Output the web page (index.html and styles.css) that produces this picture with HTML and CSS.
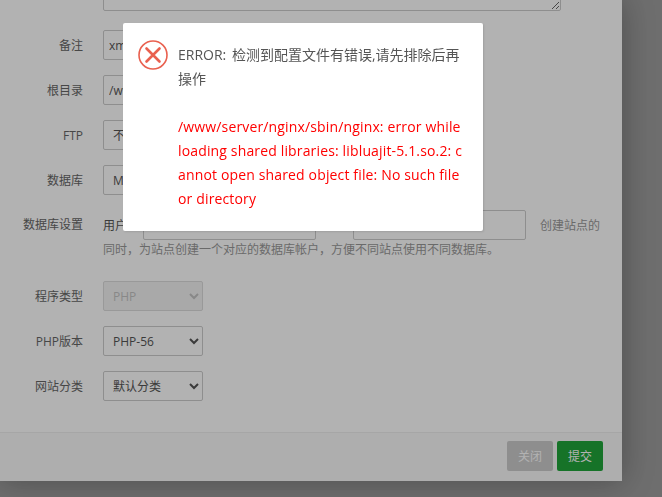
FILE: index.html
```html
<!DOCTYPE html>
<html lang="zh-CN">
<head>
    <meta charset="UTF-8">
    <meta name="viewport" content="width=device-width, initial-scale=1.0">
    <title>添加站点</title>
    <link rel="stylesheet" href="styles.css">
</head>
<body>
    <div class="panel">
        <form class="site-form">
            <div class="top-row">
                <textarea class="field-area"></textarea>
            </div>
            <div class="form-row">
                <label class="row-label">备注</label>
                <input class="field-input" type="text" value="xmr.example.com">
            </div>
            <div class="form-row">
                <label class="row-label">根目录</label>
                <input class="field-input" type="text" value="/www/wwwroot/xmr.example.com">
            </div>
            <div class="form-row">
                <label class="row-label">FTP</label>
                <select class="field-select wide"><option>不创建</option></select>
            </div>
            <div class="form-row">
                <label class="row-label">数据库</label>
                <select class="field-select wide"><option>MySQL</option></select>
            </div>
            <div class="form-row db-row">
                <label class="row-label">数据库设置</label>
                <div class="db-fields">
                    <div class="db-line">
                        <span class="db-name">用户名</span>
                        <input class="field-input db-input" type="text">
                        <span class="db-pass">密码</span>
                        <input class="field-input db-input" type="text">
                        <span class="db-hint">创建站点的</span>
                    </div>
                    <p class="hint-line">同时，为站点创建一个对应的数据库帐户，方便不同站点使用不同数据库。</p>
                </div>
            </div>
            <div class="form-row">
                <label class="row-label">程序类型</label>
                <select class="field-select" disabled><option>PHP</option></select>
            </div>
            <div class="form-row">
                <label class="row-label">PHP版本</label>
                <select class="field-select"><option>PHP-56</option></select>
            </div>
            <div class="form-row">
                <label class="row-label">网站分类</label>
                <select class="field-select"><option>默认分类</option></select>
            </div>
        </form>
        <div class="panel-footer">
            <button class="btn btn-close" type="button">关闭</button>
            <button class="btn btn-submit" type="button">提交</button>
        </div>
    </div>

    <div class="shade"></div>

    <!-- error dialog -->
    <div class="dialog">
        <svg class="dialog-icon" width="30" height="30" viewBox="0 0 30 30">
            <circle cx="15" cy="15" r="14" fill="none" stroke="#e9604f" stroke-width="1.6"/>
            <path d="M8.5 8.5 L21.5 21.5 M21.5 8.5 L8.5 21.5" fill="none" stroke="#e9604f" stroke-width="2.6" stroke-linecap="round"/>
        </svg>
        <div class="dialog-text">
            <span class="dialog-title">ERROR: 检测到配置文件有错误,请先排除后再操作</span>
            <br><br>
            <span class="error-text">/www/server/nginx/sbin/nginx: error while loading shared libraries: libluajit-5.1.so.2: cannot open shared object file: No such file or directory</span>
        </div>
    </div>
</body>
</html>
```

FILE: styles.css
```css
html, body {
    height: 100%;
}
body {
    margin: 0;
    background-color: #9e9e9e;
    font-family: "Open Sans", "Noto Sans CJK SC", sans-serif;
    font-size: 12px;
    color: #555;
    overflow: hidden;
}
.panel {
    width: 622px;
    height: 481px;
    background-color: #fff;
    box-shadow: 0 0 30px rgba(0, 0, 0, 0.3);
    display: flex;
    flex-direction: column;
    overflow: hidden;
}
.site-form {
    flex: 1;
    display: flex;
    flex-direction: column;
    gap: 15px;
}
.top-row {
    height: 15px;
    margin-top: -4px;
    margin-bottom: 4px;
    padding-left: 103px;
    overflow: hidden;
    display: flex;
    align-items: flex-end;
}
.field-area {
    display: block;
    flex: none;
    box-sizing: border-box;
    width: 458px;
    height: 40px;
    border: 1px solid #ccc;
    border-radius: 2px;
    margin: 0;
}
.form-row {
    display: flex;
    align-items: center;
    height: 30px;
}
.row-label {
    width: 83px;
    margin-right: 20px;
    text-align: right;
    font-size: 12px;
    color: #666;
    flex: none;
}
.field-input, .field-select {
    box-sizing: border-box;
    height: 30px;
    border: 1px solid #ccc;
    border-radius: 2px;
    background-color: #fff;
    color: #555;
    font-family: "Open Sans", "Noto Sans CJK SC", sans-serif;
    font-size: 12px;
    padding: 0 5px;
    margin: 0;
}
.field-input {
    width: 340px;
}
.field-select {
    width: 100px;
}
.field-select.wide {
    width: 120px;
}
.field-select:disabled {
    background-color: #eee;
    color: #aaa;
    opacity: 0.7;
}
.db-row {
    height: 56px;
    align-items: flex-start;
}
.db-row .row-label {
    line-height: 30px;
}
.db-fields {
    flex: none;
    width: 519px;
}
.db-line {
    display: flex;
    align-items: center;
    height: 30px;
    white-space: nowrap;
}
.db-name {
    width: 40px;
}
.db-input {
    width: 173px;
}
.db-pass {
    width: 37px;
    text-align: center;
}
.db-hint {
    margin-left: 14px;
    color: #999;
}
.hint-line {
    margin: 2px 0 0;
    line-height: 16px;
    color: #999;
    white-space: nowrap;
}
.panel-footer {
    box-sizing: border-box;
    height: 49px;
    border-top: 1px solid #eee;
    background-color: #fafafa;
    display: flex;
    justify-content: flex-end;
    align-items: flex-start;
    gap: 4px;
    padding: 8px 19px 0 0;
}
.btn {
    width: 46px;
    height: 30px;
    border: none;
    border-radius: 2px;
    color: #fff;
    font-family: "Open Sans", "Noto Sans CJK SC", sans-serif;
    font-size: 12px;
    padding: 0;
}
.btn-close {
    background-color: #ccc;
}
.btn-submit {
    background-color: #20a53a;
}
.shade {
    position: fixed;
    top: 0;
    left: 0;
    width: 100%;
    height: 100%;
    background-color: rgba(0, 0, 0, 0.3);
}
.dialog {
    position: absolute;
    left: 123px;
    top: 23px;
    box-sizing: border-box;
    width: 360px;
    height: 208px;
    padding: 20px 20px 20px 55px;
    background-color: #fff;
    border-radius: 2px;
    box-shadow: 1px 1px 2px rgba(0, 0, 0, 0.1);
}
.dialog-icon {
    position: absolute;
    left: 15px;
    top: 17px;
}
.dialog-text {
    font-size: 14px;
    line-height: 24px;
    color: #555;
    word-break: break-all;
}
.dialog-title {
    word-spacing: 2px;
}
.error-text {
    color: #ff0000;
    letter-spacing: 0.15px;
}
```
